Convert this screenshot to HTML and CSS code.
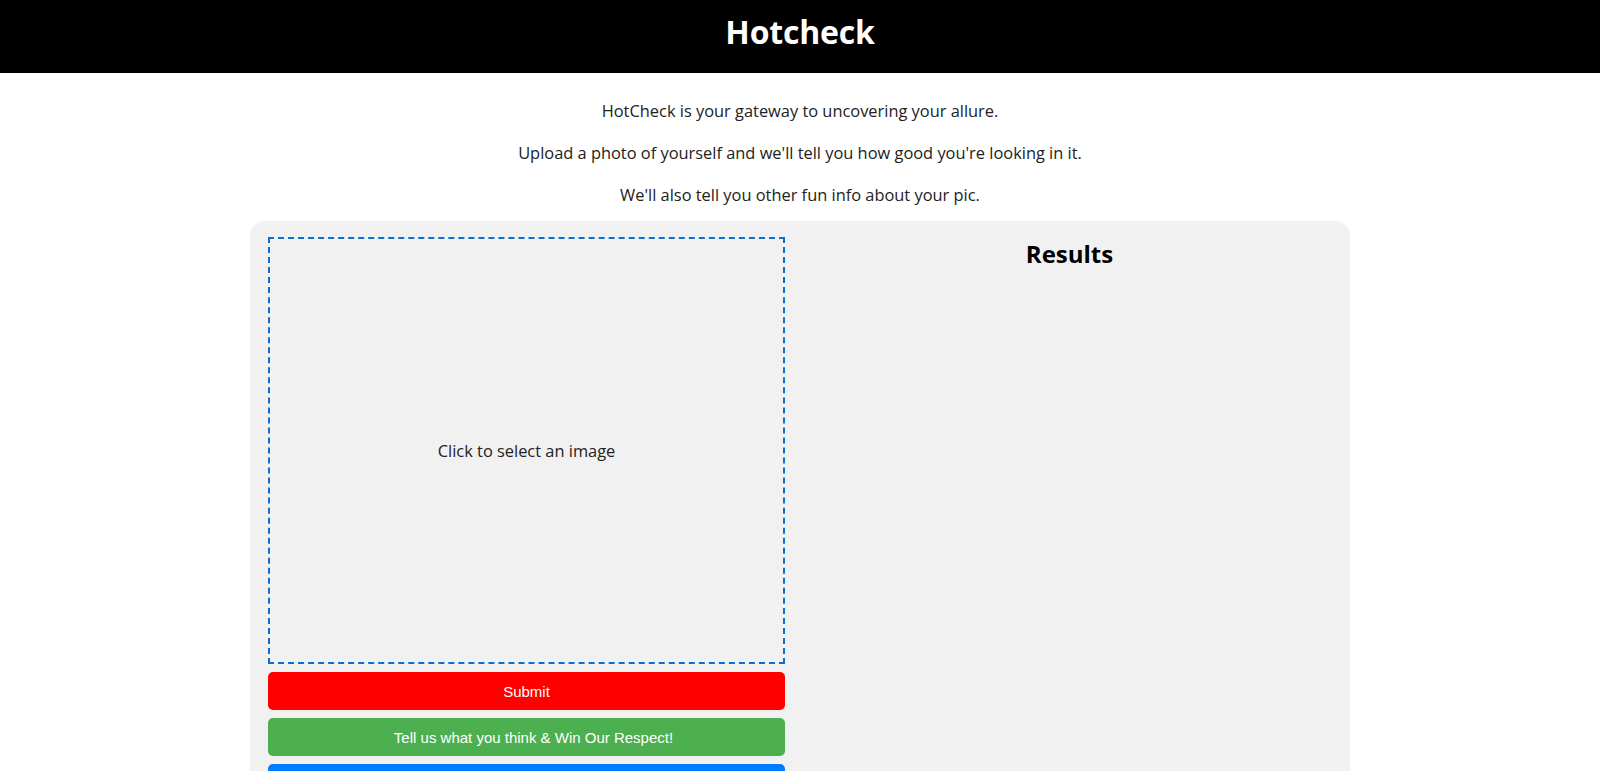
FILE: index.html
```html
<!DOCTYPE html>
<html lang="en">
<head>
<meta charset="utf-8">
<title>Hotcheck</title>
<link rel="stylesheet" href="styles.css">
</head>
<body>
<header class="site-header">
  <h1 class="site-title">Hotcheck</h1>
</header>
<main class="page">
  <section class="intro">
    <p>HotCheck is your gateway to uncovering your allure.</p>
    <p>Upload a photo of yourself and we'll tell you how good you're looking in it.</p>
    <p>We'll also tell you other fun info about your pic.</p>
  </section>
  <section class="panel">
    <div class="upload-col">
      <div class="dropzone">Click to select an image</div>
      <button class="btn btn-red">Submit</button>
      <button class="btn btn-green">Tell us what you think &amp; Win Our Respect!</button>
      <button class="btn btn-blue">Share</button>
    </div>
    <div class="results-col">
      <h2 class="results-title">Results</h2>
    </div>
  </section>
</main>
</body>
</html>
```
FILE: styles.css
```css
html, body {
  margin: 0;
  padding: 0;
}
body {
  font-family: "Open Sans", "Noto Sans", sans-serif;
  color: #222;
  background: #fff;
}
.site-header {
  background: #000;
  height: 73px;
  box-sizing: border-box;
  padding-bottom: 10px;
  display: flex;
  align-items: center;
  justify-content: center;
}
.site-title {
  margin: 0;
  color: #fff;
  font-size: 32px;
  font-weight: 700;
  letter-spacing: -0.2px;
}
.page {
  display: flex;
  flex-direction: column;
  align-items: center;
}
.intro {
  text-align: center;
  font-size: 16.4px;
  padding-top: 25px;
}
.intro p {
  margin: 0 0 16px;
  line-height: 26px;
}
.intro p:last-child {
  margin-bottom: 0;
}
.panel {
  margin-top: 13px;
  width: 1100px;
  box-sizing: border-box;
  background: #f1f1f1;
  border-radius: 15px;
  padding: 16px 20px 16px 18px;
  display: grid;
  grid-template-columns: 517px 1fr;
  gap: 20px;
  min-height: 600px;
}
.upload-col {
  display: flex;
  flex-direction: column;
  gap: 8px;
}
.dropzone {
  height: 423px;
  border: 2px dashed #0a6fcf;
  display: flex;
  align-items: center;
  justify-content: center;
  font-size: 16.4px;
  color: #222;
}
.btn {
  height: 38px;
  border: none;
  border-radius: 5px;
  color: #fff;
  font-family: "Liberation Sans", Arial, sans-serif;
  font-size: 15px;
  padding: 0;
}
.btn-red { background: #ff0000; }
.btn-green { background: #4caf50; padding-left: 14px; }
.btn-blue { background: #007bff; padding-top: 24px; }
.results-col {
  text-align: center;
  padding-left: 4px;
}
.results-title {
  margin: 1px 0 0;
  font-size: 24px;
  font-weight: 700;
  color: #000;
  line-height: 32px;
}
```
